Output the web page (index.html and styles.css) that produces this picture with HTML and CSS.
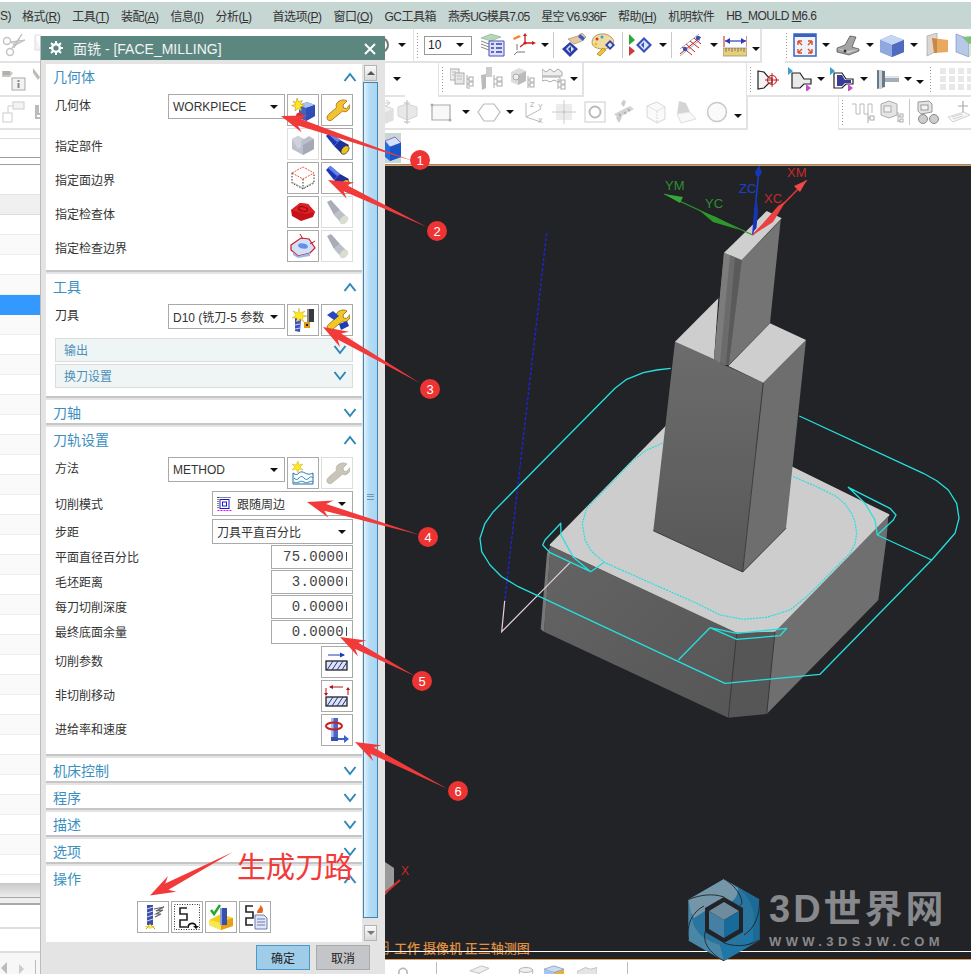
FILE: index.html
```html
<!DOCTYPE html>
<html lang="zh">
<head>
<meta charset="utf-8">
<title>面铣 - [FACE_MILLING]</title>
<link rel="stylesheet" href="styles.css">
</head>
<body>
<svg class="defs" aria-hidden="true">
  <defs>
    <linearGradient id="blockFront" x1="0" y1="0" x2="0" y2="1"><stop offset="0" stop-color="#6c6c6c"/><stop offset="1" stop-color="#585858"/></linearGradient>
    <linearGradient id="baseFront" x1="0" y1="0" x2="1" y2="1"><stop offset="0" stop-color="#646464"/><stop offset="1" stop-color="#565656"/></linearGradient>
    <symbol id="chev-up" viewBox="0 0 14 10"><path d="M1.500 9L7 2l5.500 7" fill="none" stroke="#2f87b8" stroke-width="2"/></symbol>
    <symbol id="chev-down" viewBox="0 0 14 10"><path d="M1.500 1L7 8l5.500-7" fill="none" stroke="#2f87b8" stroke-width="2"/></symbol>
    <symbol id="i-geom" viewBox="0 0 26 26"><path d="M9 8l8-3 8 3v11l-9 5-7-3z" fill="#3f62c8"/><path d="M9 8l8-3 8 3-9 3z" fill="#a9c4ee"/><path d="M16 11l9-3v11l-9 5z" fill="#2f4db5"/><path d="M7 1l1.500 4 4-1.500-2 3.500 4 1.500-4 1.500 1 4L8 11.500 5 14l.5-4-4-1.500 4-1L3 4l3 1.500z" fill="#ffe81f" stroke="#b8860b" stroke-width=".5"/><circle cx="9.500" cy="19" r="3.500" fill="#d8322a"/></symbol>
    <symbol id="i-wrench" viewBox="0 0 26 26"><path d="M23 4l-4 4 .5 3 3 .5 3.500-4c.5 3-1 6-4 7-1.500.4-2.500.2-3.500-.3L9 22c-1.500 2-4.500 2-5.500.5s-.5-3.500 1-5l8-7c-.5-1.500-.5-3 .5-4.500C15 3 20 2 23 4z" fill="#f2c230" stroke="#a06a10" stroke-width=".8"/></symbol>
    <symbol id="i-wrench-gray" viewBox="0 0 26 26"><path d="M23 4l-4 4 .5 3 3 .5 3.500-4c.5 3-1 6-4 7-1.500.4-2.500.2-3.500-.3L9 22c-1.500 2-4.500 2-5.500.5s-.5-3.500 1-5l8-7c-.5-1.500-.5-3 .5-4.500C15 3 20 2 23 4z" fill="#c9c5b8" stroke="#b5b0a0" stroke-width=".8"/></symbol>
    <symbol id="i-wrench-blue" viewBox="0 0 26 26"><path d="M23 4l-4 4 .5 3 3 .5 3.500-4c.5 3-1 6-4 7-1.500.4-2.500.2-3.500-.3L9 22c-1.500 2-4.500 2-5.500.5s-.5-3.500 1-5l8-7c-.5-1.500-.5-3 .5-4.500C15 3 20 2 23 4z" fill="#f4c820" stroke="#8a6a10" stroke-width=".8"/><path d="M3 8l6-4 6 5-5 4z" fill="#2a47c0"/><path d="M15 17l8-3 2 5-8 4z" fill="#1f3db0"/></symbol>
    <symbol id="i-part-gray" viewBox="0 0 26 26"><path d="M2 8l6-3 6 3 5-3 5 3v10l-11 6L2 18z" fill="#bcc0cc"/><path d="M2 8l6-3 6 3-3 2v6l-3 2z" fill="#cfd2da"/><path d="M13 14l11-6v10l-11 6z" fill="#a5a9b5"/></symbol>
    <symbol id="i-torch" viewBox="0 0 26 26"><path d="M2 5l4-4 10 8-6 6z" fill="#1f35b5"/><path d="M4 3l3-2 9 8-3 2z" fill="#5d86e8"/><path d="M10 15l6-6 9 5-7 9z" fill="#1e2f9e"/><ellipse cx="21" cy="19" rx="5" ry="3.200" transform="rotate(-50 21 19)" fill="#e8c21e" stroke="#222" stroke-width=".6"/></symbol>
    <symbol id="i-torch-gray" viewBox="0 0 26 26"><path d="M3 3l4-2 9 10-6 5z" fill="#a9adb8"/><path d="M10 16l6-5 8 8-6 6z" fill="#bcc0c8"/><ellipse cx="20" cy="21" rx="5" ry="3.500" transform="rotate(-45 20 21)" fill="#dcdcd0"/></symbol>
    <symbol id="i-face" viewBox="0 0 26 26"><path d="M2 8l11-6 11 6-11 6z" fill="none" stroke="#ee5a3a" stroke-dasharray="2 1"/><path d="M2 8v10l11 6 11-6V8M13 14v10" fill="none" stroke="#333" stroke-dasharray="1.500 1.500"/><path d="M2 17l11 6 11-6" fill="none" stroke="#888" stroke-width=".6"/></symbol>
    <symbol id="i-check-red" viewBox="0 0 26 26"><path d="M1 11l9-7 8 1 7 8-2 5-12 4-9-5z" fill="#c4121a"/><path d="M1 11l9-7 8 1 7 8-9 2z" fill="#e01e24"/><ellipse cx="13" cy="10" rx="4.500" ry="2.200" fill="none" stroke="#7a0a10" transform="rotate(15 13 10)"/></symbol>
    <symbol id="i-check-bnd" viewBox="0 0 26 26"><path d="M1 12l10-7 8 1 6 9-5 5-12 3-7-6z" fill="#cfe0f8" stroke="#d01a20" stroke-width="1.200"/><ellipse cx="13" cy="13" rx="5" ry="2.500" fill="#6a8ce8" transform="rotate(12 13 13)"/><path d="M3 19l5 4 12-3v3l-12 2-5-3z" fill="#9ab7e8"/><path d="M13 6L10 1M20 11l5-3" stroke="#d01a20"/></symbol>
    <symbol id="i-tool-new" viewBox="0 0 26 26"><path d="M17 2h7v13h-7z" fill="#3a3a3e"/><path d="M17 2h2v13h-2z" fill="#8a8a92"/><path d="M5 11l6 1-1 13-5-1z" fill="#3d55b8"/><path d="M6 14l4-1M5 18l5-1M5 22l5-1" stroke="#c9d4f5"/><path d="M9 1l1 5 5-2-3 4 5 1-5 2 2 4-4-3-3 3 0-4-5 0 4-3-3-4 5 2z" fill="#ffe81f" stroke="#c09a10" stroke-width=".4"/><rect x="14" y="15" width="6" height="6" fill="#e09a1a"/><rect x="16" y="17" width="2" height="2" fill="#222"/></symbol>
    <symbol id="i-method" viewBox="0 0 26 26"><path d="M3 13c3 2 4 2 6 0s4-1 6 0 4 2 8 0v11H3z" fill="#fff" stroke="#1f6d9f"/><path d="M4 18c2 2 3 2 5 0s3-2 5 0 3 2 5 0 3-1 4 0M4 22c2 1 3 1 5 0s3-1 5 0 3 1 5 0 3-1 4 0" fill="none" stroke="#1f80b8"/><path d="M8 1l1 4 4-1-3 3 3 3-4-1-1 4-2-4-4 1 3-3-3-3 4 1z" fill="#ffe81f" stroke="#c09a10" stroke-width=".4"/></symbol>
    <symbol id="i-cut" viewBox="0 0 26 26"><path d="M4 6h16" stroke="#1f3db0"/><path d="M16 3.500l5 2.500-5 2.500z" fill="#1f3db0"/><rect x="2" y="12" width="21" height="9" fill="#dfe4f5" stroke="#111" stroke-width="1.200"/><path d="M3 21l6-9M8 21l6-9M13 21l6-9M18 21l5-8" stroke="#1f2f88"/></symbol>
    <symbol id="i-noncut" viewBox="0 0 26 26"><path d="M6 4h13" stroke="#b81218"/><path d="M9 2v4l-4-2z" fill="#b81218"/><path d="M2 5v7M24 12V5" stroke="#b81218"/><path d="M0 10h4l-2 3zM22 7h4l-2-3z" fill="#b81218"/><rect x="2" y="14" width="21" height="9" fill="#dfe4f5" stroke="#111" stroke-width="1.200"/><path d="M3 23l6-9M8 23l6-9M13 23l6-9M18 23l5-8" stroke="#1f2f88"/></symbol>
    <symbol id="i-feed" viewBox="0 0 26 26"><rect x="7" y="1" width="7" height="19" fill="#4a66c8"/><rect x="7" y="1" width="2.500" height="19" fill="#a8bcee"/><ellipse cx="10" cy="9" rx="8" ry="3.500" fill="none" stroke="#c8201c" stroke-width="2"/><path d="M7 20h7v4H7z" fill="#3a50a8"/><path d="M14 21h6v-3l5 4-5 4v-3h-6z" fill="#3a60d8"/></symbol>
    <symbol id="i-gen" viewBox="0 0 26 26"><rect x="7" y="1" width="6" height="20" fill="#3f4fa8"/><path d="M7 5l6-2M7 9l6-2M7 13l6-2M7 17l6-2" stroke="#c9d4f5"/><path d="M14 5l10-2-8 4 7-1-7 4 5 0-6 3" fill="none" stroke="#666" stroke-width="1.200"/><path d="M4 22h12l-6 3z" fill="#f0e060"/><path d="M10 20l-4 5M10 20l5 5" stroke="#c4a810"/></symbol>
    <symbol id="i-replay" viewBox="0 0 26 26"><rect x=".5" y=".5" width="25" height="25" fill="none" stroke="#333" stroke-dasharray="1 1.500"/><path d="M13 4H6v6h7v6H6v7h7" fill="none" stroke="#222" stroke-width="1.600"/><path d="M14 24c0-6 8-6 8-1" fill="none" stroke="#111" stroke-width="1.600"/><path d="M19 22h6l-3 3z" fill="#111"/></symbol>
    <symbol id="i-verify" viewBox="0 0 26 26"><path d="M1 16l12-6 12 4v8l-12 4-12-5z" fill="#f2d020"/><path d="M13 18l12-4v8l-12 4z" fill="#e8a018"/><path d="M1 16l12 3v7l-12-5z" fill="#f8e850"/><rect x="12" y="4" width="7" height="17" fill="#3a50a8"/><rect x="12" y="4" width="2" height="17" fill="#8aa0e0"/><path d="M3 6l3 4 6-9" fill="none" stroke="#28a828" stroke-width="2.500"/></symbol>
    <symbol id="i-list" viewBox="0 0 26 26"><path d="M11 2H4v6h7v6H4v7h7" fill="none" stroke="#222" stroke-width="1.600"/><path d="M13 11h9l3 3v11H13z" fill="#dfe6f8" stroke="#6a7ab0"/><path d="M15 15h8M15 18h8M15 21h8" stroke="#6a7ab0"/><path d="M15 9c0-4 4-5 3-8 3 2 4 5 2 8z" fill="#e8641c"/></symbol>

    <symbol id="t-scissors" viewBox="0 0 24 24"><circle cx="5" cy="8" r="3.500" fill="none" stroke="#c4c4c4" stroke-width="1.500"/><circle cx="8" cy="19" r="3.500" fill="none" stroke="#c4c4c4" stroke-width="1.500"/><path d="M8 9l15-2-11 6M9 16L20 1l-8 14" fill="#d8d8d8" stroke="#bbb"/></symbol>
    <symbol id="t-toolinfo" viewBox="0 0 24 24"><path d="M0 4h8l3 2-3 4H0z" fill="#c8c8c0"/><path d="M1 5l7 0M1 7h7" stroke="#999"/><rect x="10" y="11" width="13" height="12" fill="#f2f2f2" stroke="#aaa"/><rect x="15.500" y="13" width="2" height="2" fill="#888"/><rect x="15.500" y="16" width="2" height="5" fill="#888"/></symbol>
    <symbol id="t-rects" viewBox="0 0 24 24"><rect x="1" y="13" width="9" height="9" fill="#fff" stroke="#ccc"/><rect x="11" y="2" width="11" height="7" fill="#f4f4f4" stroke="#ccc"/><path d="M6 13V6h5" fill="none" stroke="#ccc"/></symbol>
    <symbol id="t-stub-a" viewBox="0 0 7 24"><path d="M1 2h6M1 2v15h6" fill="#f2f2f2" stroke="#ddd"/></symbol>
    <symbol id="t-stub-b" viewBox="0 0 7 24"><path d="M0 1l7 9-2 3-5-7z" fill="#bdbdb5"/></symbol>
    <symbol id="t-stub-c" viewBox="0 0 7 24"><path d="M1 5v13h6M3 5v9h4" fill="none" stroke="#bbb" stroke-width="2"/></symbol>
    <symbol id="t-stack" viewBox="0 0 24 24"><path d="M0 5l10-4 10 3-10 4z" fill="#b7d8b7" stroke="#7aaa8a" stroke-width=".6"/><path d="M0 8l8 3M0 11l8 3M0 14l8 3" stroke="#888"/><path d="M8 8h15v15H8z" fill="#dce0f8" stroke="#4a50b8"/><path d="M10 11h3M10 15h3M10 19h3M15 11h6M15 15h6M15 19h6" stroke="#3a40a8" stroke-width="1.400"/></symbol>
    <symbol id="t-csys" viewBox="0 0 24 24"><path d="M1 5l6-3 2 2-7 3z" fill="#f08a30"/><path d="M13 10V2M13 10h9M13 10l-5 4" stroke="#c82020" stroke-width="1.300"/><path d="M11 3l2-3 2 3zM20 8l4 2-4 2z" fill="#c82020"/><path d="M5 17V11M5 19h8M5 19l-3 3" stroke="#777"/><circle cx="13" cy="10" r="1.500" fill="#c82020"/></symbol>
    <symbol id="t-hand" viewBox="0 0 24 24"><path d="M6 6l10-3 4-3 4 4-4 4-8 3z" fill="#e8c8a0" stroke="#a07a50" stroke-width=".6"/><path d="M18 1l5 4-2 3-5-4z" fill="#3a60c0"/><path d="M0 16l8-7 8 7-8 8z" fill="#2a3fa8"/><path d="M4 16l4-4 4 4-4 4z" fill="#dbe4f8"/><path d="M6 16l3-3v7z" fill="#2a3fa8"/></symbol>
    <symbol id="t-palette" viewBox="0 0 24 24"><path d="M1 9c0-7 10-10 16-7s7 8 4 9c-2 .5-3 0-3 2s-3 4-8 3-9-2-9-7z" fill="#f0dca0" stroke="#9a7a30" stroke-width=".7"/><circle cx="6" cy="6" r="1.500" fill="#e03030"/><circle cx="11" cy="4" r="1.500" fill="#30a0e0"/><circle cx="5" cy="11" r="1.500" fill="#e8c020"/><path d="M6 21l6-6 3 2-6 6z" fill="#f2c230" stroke="#a06a10" stroke-width=".6"/><path d="M14 12l5-5 5 5-5 5z" fill="#2a3fa8"/><path d="M16.500 12l2.500-2.500 2.500 2.500-2.500 2.500z" fill="#dbe4f8"/></symbol>
    <symbol id="t-play" viewBox="0 0 24 24"><path d="M0 1l6 6-6 5z" fill="#2aa838"/><path d="M0 13l6 5-6 5z" fill="#d03a3a"/><path d="M7 12l8-8 8 8-8 8z" fill="#3a50b8"/><path d="M10 12l5-5 5 5-5 5z" fill="#dbe4f8"/><path d="M12 12l3-3v6z" fill="#3a50b8"/></symbol>
    <symbol id="t-pattern" viewBox="0 0 24 24"><path d="M1 21L22 4M3 14l10 8M7 11l9 8M11 8l9 7M15 5l7 6" stroke="#c82020"/><path d="M1 16L20 1M1 23L21 7" stroke="#777" stroke-width=".6"/><circle cx="19" cy="5" r="2.200" fill="#3a50b8"/><circle cx="6" cy="16" r="2.200" fill="#3a50b8"/></symbol>
    <symbol id="t-measure" viewBox="0 0 24 24"><path d="M1 3v11M24 3v11" stroke="#c81e1e"/><path d="M2 8h21" stroke="#2a3fb8" stroke-width="1.200"/><path d="M2 8l5-3v6zM23 8l-5-3v6z" fill="#2a3fb8"/><rect x="0" y="15" width="24" height="8" fill="#e8cf78" stroke="#888" stroke-width=".7"/><path d="M3 15v4M6 15v3M9 15v4M12 15v3M15 15v4M18 15v3M21 15v4" stroke="#555" stroke-width=".7"/></symbol>
    <symbol id="t-fit" viewBox="0 0 24 24"><rect x="1" y="1" width="22" height="22" fill="#eef2fb" stroke="#3a60c0" stroke-width="1.500"/><path d="M1 1h22v3H1z" fill="#3a60c0"/><path d="M5 8h4M5 8v4M19 8h-4M19 8v4M5 20h4M5 20v-4M19 20h-4M19 20v-4M5 8l4 4M19 8l-4 4M5 20l4-4M19 20l-4-4" stroke="#e05020" stroke-width="1.400" fill="none"/></symbol>
    <symbol id="t-shape" viewBox="0 0 24 24"><path d="M1 15l8-3 5-9 6 1-4 10 7 2v2l-10 4-12-3z" fill="#a4a4a4" stroke="#333" stroke-width=".6"/><path d="M1 15l11 3 11-2-11 4z" fill="#d0d0d0"/><circle cx="9" cy="18" r="1.500" fill="#333"/></symbol>
    <symbol id="t-cube" viewBox="0 0 24 24"><path d="M0 7l11-5 13 5v12l-12 5L0 19z" fill="#6d86cc"/><path d="M0 7l11-5 13 5-12 5z" fill="#c5d6f2"/><path d="M12 12l12-5v12l-12 5z" fill="#4f6abf"/><path d="M0 7l12 5v12L0 19z" fill="#8fa8e0"/></symbol>
    <symbol id="t-tan" viewBox="0 0 24 24"><path d="M2 3l10-3v18l-10 5z" fill="#dcd8d0" stroke="#999" stroke-width=".6"/><path d="M7 5l16 2v12l-13 1z" fill="#e8a860"/><path d="M7 5l5 1v14H9z" fill="#c8884a"/></symbol>
    <symbol id="t-green" viewBox="0 0 24 24"><path d="M1 1l13 5v18L1 19z" fill="#b8c8e8" stroke="#7088b8" stroke-width=".6"/><path d="M14 10l10-4v12l-10 6z" fill="#d8e8d0"/><path d="M7 4l14-1 3 4-10 4z" fill="#7cc07c"/></symbol>
    <symbol id="t-tree-doc" viewBox="0 0 24 24"><rect x="0" y="2" width="9" height="11" fill="#eee" stroke="#aaa"/><rect x="5" y="6" width="9" height="11" fill="#e8e8e8" stroke="#aaa"/><path d="M2 5h4M2 8h2M7 9h5M7 12h5" stroke="#bbb"/><path d="M17 8v13M17 12h3M17 17h3M17 21h3" stroke="#aaa"/><rect x="19" y="10" width="4" height="4" fill="#fff" stroke="#aaa"/><rect x="19" y="15" width="4" height="4" fill="#fff" stroke="#aaa"/></symbol>
    <symbol id="t-tree-tool" viewBox="0 0 24 24"><rect x="7" y="0" width="6" height="10" fill="#ccc"/><path d="M2 8l5-1 0 14-4 2z" fill="#bbb"/><path d="M15 8v13M15 12h3M15 17h3" stroke="#aaa"/><rect x="18" y="10" width="5" height="4" fill="#fff" stroke="#aaa"/><rect x="18" y="15" width="5" height="4" fill="#fff" stroke="#aaa"/></symbol>
    <symbol id="t-tree-cube" viewBox="0 0 24 24"><path d="M0 5l8-4 7 3v10l-8 4-7-3z" fill="#ddd"/><path d="M7 8l8-4v10l-8 4z" fill="#bbb"/><circle cx="5" cy="10" r="3" fill="#eee" stroke="#aaa"/><path d="M17 9v12M17 13h2M17 18h2" stroke="#aaa"/><rect x="19" y="11" width="4" height="4" fill="#fff" stroke="#aaa"/><rect x="19" y="16" width="4" height="4" fill="#fff" stroke="#aaa"/></symbol>
    <symbol id="t-tree-crown" viewBox="0 0 24 24"><path d="M0 2l4 3 4-3 4 3 4-3 4 3v4H0z" fill="#eee" stroke="#aaa"/><path d="M0 10h18v4c-2 1-3 1-4 0s-3-1-4 0-3 1-4 0-3-1-6 0z" fill="none" stroke="#aaa"/><path d="M16 12v10M16 15h3M16 20h3" stroke="#aaa"/><rect x="19" y="13" width="4" height="4" fill="#fff" stroke="#aaa"/><rect x="19" y="18" width="4" height="4" fill="#fff" stroke="#aaa"/></symbol>
    <symbol id="t-tool-cross" viewBox="0 0 24 24"><path d="M1 4l6 1 5 6h3v5h-3l-5 5-6 1z" fill="#f4f4f4" stroke="#222" stroke-width="1.200"/><circle cx="15" cy="13" r="4.500" fill="none" stroke="#d01a20" stroke-width="1.200"/><path d="M15 6v14M8 13h14" stroke="#d01a20"/></symbol>
    <symbol id="t-tool-lt" viewBox="0 0 24 24"><path d="M0 0l5 4-5 4z" fill="#3a9fd0"/><path d="M4 6h8l4 6h7v5h-7l-4 4H4z" fill="#eaeaea" stroke="#222" stroke-width="1.200"/><path d="M18 17l5 4-5 4z" fill="#c050c8"/></symbol>
    <symbol id="t-tool-dk" viewBox="0 0 24 24"><path d="M0 0l5 4-5 4z" fill="#3a9fd0"/><path d="M4 6h8l4 6h7v5h-7l-4 4H4z" fill="#fff" stroke="#222" stroke-width="1.200"/><path d="M7 8h5l3 5h6v3h-6l-3 3H7z" fill="#3a3a98"/><path d="M18 17l5 4-5 4z" fill="#c050c8"/></symbol>
    <symbol id="t-spindle" viewBox="0 0 24 24"><path d="M1 3l8 1v16l-8 2z" fill="#6a7884"/><path d="M3 3h3v19H3z" fill="#c8d0d8"/><path d="M9 9h14v6H9z" fill="#a4aeb8"/><path d="M9 9h14v2H9z" fill="#dde2e8"/></symbol>
    <symbol id="t-grid" viewBox="0 0 33 24"><path d="M2 1h6v6H2zM11 1h6v6h-6zM20 1h6v6h-6zM29 1h4v6h-4zM2 9h6v6H2zM11 9h6v6h-6zM20 9h6v6h-6zM29 9h4v6h-4zM2 17h6v6H2zM11 17h6v6h-6zM20 17h6v6h-6zM29 17h4v6h-4z" fill="#e8e8e8"/></symbol>
    <symbol id="t-gcube1" viewBox="0 0 24 24"><path d="M2 9l9-4 10 4v11l-10 4-9-4z" fill="#f0f0f0" stroke="#d4d4d4"/><path d="M11 13l10-4v11l-10 4z" fill="#e0e0e0"/><path d="M8 3h10M14 0l4 3-4 3" stroke="#ccc" fill="none"/></symbol>
    <symbol id="t-gcube2" viewBox="0 0 24 24"><path d="M2 7l9-3 10 3v9l-10 4-9-4z" fill="#e8e8e8" stroke="#d4d4d4"/><path d="M11 0v24M8 3h6M8 22h6" stroke="#bbb"/></symbol>
    <symbol id="t-rect" viewBox="0 0 24 24"><path d="M3 5h18v15H3z" fill="#f8f8f8" stroke="#aaa" stroke-width="1.200"/><circle cx="3" cy="5" r="1.500" fill="#aaa"/><circle cx="21" cy="20" r="1.500" fill="#aaa"/></symbol>
    <symbol id="t-hex" viewBox="0 0 24 24"><path d="M7 4h10l6 8-6 9H7l-6-9z" fill="#fff" stroke="#bbb" stroke-width="1.200"/></symbol>
    <symbol id="t-xyz" viewBox="0 0 24 24"><path d="M5 17V3M5 17l15-8M5 17l15 5" stroke="#bbb" fill="none"/><text x="9" y="7" class="ic-letter">Z</text><text x="17" y="9" class="ic-letter">Y</text><text x="17" y="23" class="ic-letter">X</text></symbol>
    <symbol id="t-target" viewBox="0 0 24 24"><rect x="4" y="4" width="16" height="16" fill="#ececec"/><path d="M12 0v24M0 12h24" stroke="#ccc"/><circle cx="12" cy="12" r="1" fill="#bbb"/></symbol>
    <symbol id="t-ring" viewBox="0 0 24 24"><rect x="2" y="2" width="20" height="20" fill="#fff" stroke="#ccc"/><circle cx="12" cy="12" r="5.500" fill="none" stroke="#bbb" stroke-width="2"/></symbol>
    <symbol id="t-text" viewBox="0 0 24 24"><path d="M2 14l16-8 4 3-16 9z" fill="#d4d4d4"/><path d="M9 4l2-4 3 1-2 6zM4 18l3-3 3 2-3 6z" fill="#ccc"/><path d="M7 14l2 2M12 12l2 2M16 9l2 2" stroke="#aaa" stroke-width="1.500"/></symbol>
    <symbol id="t-wire" viewBox="0 0 24 24"><path d="M2 6l10-4 8 5v12l-8 4-10-6z" fill="#fafafa" stroke="#d8d8d8"/><path d="M2 6l10 5 8-4M12 11v12" fill="none" stroke="#d8d8d8" stroke-dasharray="2 1"/></symbol>
    <symbol id="t-lamp" viewBox="0 0 24 24"><path d="M5 1l7 2 4 9-13 2z" fill="#d4d4d4"/><path d="M16 12l6 7-15 4-4-9z" fill="#f8f8f8" stroke="#e0e0e0"/></symbol>
    <symbol id="t-circle" viewBox="0 0 24 24"><circle cx="12" cy="12" r="9.500" fill="#fafafa" stroke="#c8c8c8" stroke-width="1.500"/></symbol>
    <symbol id="t-tree-wave" viewBox="0 0 24 24"><path d="M1 4h4v10h4V4h4v10h4V4h4v9" fill="none" stroke="#bbb"/><path d="M17 14v9M17 18h2" stroke="#aaa"/><rect x="19" y="16" width="4" height="4" fill="#fff" stroke="#aaa"/></symbol>
    <symbol id="t-tree-block" viewBox="0 0 24 24"><path d="M1 4l8-3 8 3v11l-8 3-8-3z" fill="#e4e4e4" stroke="#aaa"/><rect x="4" y="6" width="7" height="6" fill="#f2f2f2" stroke="#aaa"/><path d="M18 12v10M18 16h2M18 21h2" stroke="#aaa"/><rect x="20" y="14" width="3" height="3" fill="#fff" stroke="#aaa"/><rect x="20" y="19" width="3" height="3" fill="#fff" stroke="#aaa"/></symbol>
    <symbol id="t-binoc" viewBox="0 0 24 24"><path d="M3 2l11-1 3 3v8l-11 2-3-3z" fill="#e4e4e4" stroke="#999"/><rect x="6" y="5" width="7" height="5" fill="#f4f4f4" stroke="#999"/><circle cx="8" cy="19" r="4.500" fill="#ccc" stroke="#888"/><circle cx="19" cy="19" r="4.500" fill="#ccc" stroke="#888"/></symbol>
    <symbol id="t-tag" viewBox="0 0 24 24"><path d="M1 17l16-5 6 3-17 7z" fill="#f6f6f6" stroke="#d4d4d4"/><path d="M5 17l10-3M6 19l10-3" stroke="#d4d4d4"/><path d="M16 1v11M11 6h10" stroke="#aaa" stroke-width="1.200"/></symbol>
    <symbol id="t-mini" viewBox="0 0 16 30"><path d="M0 8l10-4 6 6v14l-11 4-5-4z" fill="#1e6fe0"/><path d="M0 8l10-4 6 6-11 4z" fill="#cfe0f8" stroke="#7a3aa0" stroke-width=".6"/><path d="M5 14l11-4v14l-11 4z" fill="#1a55c8"/></symbol>
    <symbol id="t-lock" viewBox="0 0 24 24"><path d="M7 24V9a5 5 0 0 1 10 0v15" fill="none" stroke="#bbb" stroke-width="2"/></symbol>
    <symbol id="t-plane" viewBox="0 0 24 24"><path d="M1 7l14-6 9 3-12 6z" fill="#eee" stroke="#bbb"/><path d="M12 10v14" stroke="#bbb"/></symbol>
    <symbol id="t-cyl" viewBox="0 0 24 24"><ellipse cx="12" cy="6" rx="8" ry="3" fill="#eee" stroke="#aaa"/><path d="M4 6v18M20 6v18" stroke="#aaa"/></symbol>
    <symbol id="t-ccube" viewBox="0 0 24 24"><path d="M0 5l12-4 12 4v19H0z" fill="#e8b040"/><path d="M0 5l12-4 12 4-12 4z" fill="#c8dcf4" stroke="#6a8ac8" stroke-width=".7"/><path d="M0 5l12 4v15H0z" fill="#a8c4ec"/></symbol>
    <symbol id="t-blocks" viewBox="0 0 24 24"><path d="M0 8l10-5 6 2 8-2v21H0z" fill="#e4e4e4" stroke="#bbb"/></symbol>
  </defs>
</svg>

<header class="menubar">
  <span class="mi first">S)</span>
  <span class="mi">格式(<u>R</u>)</span>
  <span class="mi">工具(<u>T</u>)</span>
  <span class="mi">装配(<u>A</u>)</span>
  <span class="mi">信息(<u>I</u>)</span>
  <span class="mi">分析(<u>L</u>)</span>
  <span class="mi wide">首选项(<u>P</u>)</span>
  <span class="mi">窗口(<u>O</u>)</span>
  <span class="mi">GC工具箱</span>
  <span class="mi tight">燕秀UG模具7.05</span>
  <span class="mi tight">星空 V6.936F</span>
  <span class="mi">帮助(<u>H</u>)</span>
  <span class="mi">机明软件</span>
  <span class="mi">HB_MOULD <u>M</u>6.6</span>
</header>

<section class="toolbars">
  <div class="tb-row">
    <div class="tb-group g1a">
      <svg class="ic m2"><use href="#t-scissors"/></svg>
      <svg class="stub m8"><use href="#t-stub-a"/></svg>
      <span class="fill"></span>
      <span class="stub-ring"></span>
      <i class="caret m9"></i>
    </div>
    <div class="tb-group g1b edge-left">
      <i class="grip m2"></i>
      <div class="tb-select m5"><span>10</span><i class="caret"></i></div>
      <svg class="ic m9"><use href="#t-stack"/></svg>
      <svg class="ic m7"><use href="#t-csys"/></svg>
      <i class="caret m5"></i><i class="vr m4"></i>
      <svg class="ic m8"><use href="#t-hand"/></svg>
      <svg class="ic m5"><use href="#t-palette"/></svg>
      <i class="vr m7"></i>
      <svg class="ic m6"><use href="#t-play"/></svg>
      <i class="caret m6"></i><i class="vr m4"></i>
      <svg class="ic m7"><use href="#t-pattern"/></svg>
      <i class="caret m7"></i>
      <svg class="ic m5"><use href="#t-measure"/></svg>
      <i class="caret low m5"></i>
    </div>
    <div class="tb-group g1c">
      <i class="grip"></i>
      <svg class="ic m5"><use href="#t-fit"/></svg>
      <i class="caret m5"></i>
      <svg class="ic m6"><use href="#t-shape"/></svg>
      <i class="caret m6"></i>
      <svg class="ic m6"><use href="#t-cube"/></svg>
      <i class="caret m6"></i>
      <svg class="ic m7"><use href="#t-tan"/></svg>
      <svg class="ic m6"><use href="#t-green"/></svg>
    </div>
  </div>

  <div class="tb-row">
    <div class="tb-group g2a">
      <svg class="ic m2"><use href="#t-toolinfo"/></svg>
      <svg class="stub m7"><use href="#t-stub-b"/></svg>
      <span class="fill"></span>
      <i class="caret m4 tail4"></i>
    </div>
    <div class="tb-group g2b edge-left">
      <i class="grip m2"></i>
      <svg class="ic m6"><use href="#t-tree-doc"/></svg>
      <svg class="ic m5"><use href="#t-tree-tool"/></svg>
      <svg class="ic m8"><use href="#t-tree-cube"/></svg>
      <svg class="ic m7"><use href="#t-tree-crown"/></svg>
      <i class="caret m4"></i>
    </div>
    <div class="tb-group g2c edge-left">
      <i class="grip m2"></i>
      <svg class="ic m5"><use href="#t-tool-cross"/></svg>
      <svg class="ic m7"><use href="#t-tool-lt"/></svg>
      <i class="caret m5"></i>
      <svg class="ic m5"><use href="#t-tool-dk"/></svg>
      <i class="caret m6"></i>
      <svg class="ic m8"><use href="#t-spindle"/></svg>
      <i class="caret m4"></i>
      <i class="caret low m4"></i>
      <span class="fill"></span>
      <i class="grip edge-left-tight"></i>
      <svg class="ic-grid"><use href="#t-grid"/></svg>
    </div>
  </div>

  <div class="tb-row">
    <div class="tb-group g3a">
      <svg class="ic m2"><use href="#t-rects"/></svg>
      <svg class="stub m9"><use href="#t-stub-c"/></svg>
      <span class="fill"></span>
      <svg class="ic"><use href="#t-gcube1"/></svg>
      <svg class="ic"><use href="#t-gcube2"/></svg>
      <svg class="ic m9"><use href="#t-rect"/></svg>
      <i class="caret m9"></i>
      <svg class="ic m7"><use href="#t-hex"/></svg>
      <i class="caret m5"></i>
      <svg class="ic m7"><use href="#t-xyz"/></svg>
      <svg class="ic m7"><use href="#t-target"/></svg>
      <svg class="ic m7"><use href="#t-ring"/></svg>
      <svg class="ic m5"><use href="#t-text"/></svg>
      <svg class="ic m9"><use href="#t-wire"/></svg>
      <svg class="ic m5"><use href="#t-lamp"/></svg>
      <svg class="ic m7"><use href="#t-circle"/></svg>
      <i class="caret low m5"></i>
      <span class="tail4"></span>
    </div>
    <div class="tb-group g3b edge-left">
      <i class="grip m2"></i>
      <svg class="ic m7"><use href="#t-tree-wave"/></svg>
      <svg class="ic m5"><use href="#t-tree-block"/></svg>
      <i class="vr m5"></i>
      <svg class="ic m5"><use href="#t-binoc"/></svg>
      <svg class="ic m8"><use href="#t-tag"/></svg>
    </div>
  </div>

  <div class="tb-row last">
    <div class="path-input"></div>
    <span class="fill"></span>
    <div class="tab-cube"><svg class="ic-mini"><use href="#t-mini"/></svg></div>
    <span class="tab-tail"></span>
  </div>
</section>

<main class="workspace">
  <aside class="navlist">
    <div class="nav-head"></div>
    <div class="nav-rows">
      <div class="row head"></div><div class="row"></div><div class="row"></div><div class="row"></div><div class="row"></div>
      <div class="row sel"></div><div class="row"></div><div class="row"></div><div class="row"></div><div class="row"></div>
      <div class="row"></div><div class="row"></div><div class="row"></div><div class="row"></div><div class="row"></div>
      <div class="row"></div><div class="row"></div><div class="row"></div><div class="row"></div><div class="row"></div>
      <div class="row"></div><div class="row"></div><div class="row"></div><div class="row"></div><div class="row"></div>
      <div class="row"></div><div class="row"></div><div class="row"></div><div class="row"></div><div class="row"></div>
      <div class="row"></div><div class="row"></div><div class="row"></div><div class="row"></div>
    </div>
    <div class="nav-split"></div>
    <div class="nav-lower"><div class="lower-row"></div><div class="lower-row"></div></div>
    <div class="nav-tabs"><i class="tab-l"></i><i class="tab-r"></i><i class="tab-vr"></i></div>
  </aside>

  <div class="graphics">
    <div class="viewport">
      <svg class="scene" viewBox="385 166 586 793">
        <!-- base -->
        <path d="M550.700 545L680 412.600 888.300 515 775 631.700 736.700 632.700z" fill="#cdcdcd" stroke="#cdcdcd" stroke-width="2" stroke-linejoin="round"/>
        <path d="M550.700 546L736.700 632.700 728.300 717.700 544 631.700z" fill="url(#baseFront)"/>
        <path d="M550.700 546L547 553 540.700 629.300 544 631.700z" fill="#777"/>
        <path d="M736.700 632.700L775 631.700 766.700 714 728.300 717.700z" fill="#565656"/>
        <path d="M775 631.700L888.300 516 886.700 537 878.300 600 766.700 714z" fill="#6f6f6f"/>
        <path d="M736.700 632.700L728.300 717.700M775 631.700L766.700 714" stroke="#3a3a3a"/>
        <!-- middle block -->
        <path d="M675 341.700L714 359.300 724.300 365 763.300 382.700 742.700 572 653.300 530.700z" fill="url(#blockFront)"/>
        <path d="M763.300 382.700L806 340 786 528.300 742.700 572z" fill="#6e6e6e"/>
        <path d="M763.300 382.700L742.700 572 653.300 530.700M742.700 572L786 528.300" fill="none" stroke="#3c3c3c"/>
        <path d="M718.300 298.300L675 341.700 714 359.300z" fill="#cecece"/>
        <path d="M770 323.300L806 340 763.300 382.700 728.300 366z" fill="#cecece"/>
        <!-- thin block -->
        <path d="M724 253L741.700 260 728.700 365 724.300 365 714 359.300z" fill="#6b6b6b"/>
        <path d="M724 253L730 255 720 363 714 359.300z" fill="#7c7c7c"/>
        <path d="M735 258L741.700 260 728.700 365 726 364z" fill="#5a5a5a"/>
        <path d="M741.700 260L780.700 220 770 323.300 728.700 365z" fill="#747474"/>
        <path d="M724 252.700L766.700 211 781.700 218.300 741.700 260z" fill="#cfcfcf"/>
        <!-- axes -->
        <path d="M752.700 235L664.300 194" stroke="#2b9a2b" stroke-width="1.300"/>
        <path d="M664.300 194L683 197 680 203z" fill="#35a835"/>
        <path d="M700 211L716 217 740 230 713 222z" fill="#2b9a2b"/>
        <path d="M752.700 235L759.300 166" stroke="#1a3ec8" stroke-width="1.500"/>
        <path d="M759 166L762 172 760 176 756 176 755 172z" fill="#1636b8"/>
        <path d="M754 211L756 193 758 211 756.500 228 753 232z" fill="#1636b8"/>
        <path d="M752.700 235L806.700 180.300" stroke="#e23a3a" stroke-width="1.500"/>
        <path d="M806.700 180.300L800 192 794 186z" fill="#ef4a4a"/>
        <path d="M753 235L778 206 786 201 773 222z" fill="#ea4040"/>
        <text x="665" y="190" class="axis green">YM</text>
        <text x="705" y="208" class="axis green">YC</text>
        <text x="739" y="193" class="axis blue">ZC</text>
        <text x="764" y="203" class="axis red">XC</text>
        <text x="787" y="177" class="axis red">XM</text>
        <!-- tool path -->
        <path d="M546.700 233.300L504.700 600.700" class="blue-dash"/>
        <path d="M570 562.700L501.700 631.700 504.700 600.700" class="pink"/>
        <path d="M670.700 368.300L656.700 370 643.300 372.700 626.700 379.300 615 388.300 493.300 511.700 485 523.300 480 538.300 481.700 551.700 490 565 501.700 576.700 518.300 586.700 725 683.300 820 674.300 931.700 560 955 533.300 959 518.300 956.700 503.300 948.300 490 936.700 480.700 923.300 473.300 799.300 416" class="cyan"/>
        <path d="M662.300 443.300L646.700 450 633.300 460 586.700 508.300 582.300 523.300 585 540 591.700 551.700 605 562.700 696.700 603.300 720 615 743.300 619.300 766.700 617.300 790 610 806.700 596.700 850 553.300 855 544 856.700 533.300 855 522 851.700 513.300 845 504 836.700 496.700 816.700 486.700 793.300 476.700" class="cyan-dot"/>
        <path d="M605 561.700L590.700 571.700 550 552.700 542.700 545 545 540 560.700 523.300 561 535 573.300 557.300 590.700 571.700" class="cyan"/>
        <path d="M931.700 560L877.300 535 893.300 520 896 515 890 508.300 848.300 487.300 865 503.300 875 520 877.300 535" class="cyan"/>
        <path d="M678.300 660L710 627.700 736.700 639.300 780 635.700 786.700 628.300 736.700 633.300 710 627.700" class="cyan"/>
        <!-- WCS triad -->
        <path d="M385 862L394 868 394 885 385 895z" fill="#9a9a9a"/>
        <path d="M385 893L400 880" stroke="#d83030" stroke-width="2"/>
        <text x="401" y="875" class="axis red small">X</text>
        <path d="M385 942h3v12h-3M385 947h2" fill="none" stroke="#e0903f"/>
        <text x="394" y="953" class="status">工作 摄像机 正三轴测图</text>
      </svg>
      <div class="hline"></div>
    </div>
    <div class="bottom-strip">
      <svg class="ic-b m-lock"><use href="#t-lock"/></svg>
      <i class="b-vr m-a"></i>
      <svg class="ic-b m-b"><use href="#t-plane"/></svg>
      <svg class="ic-b m-c"><use href="#t-cyl"/></svg>
      <svg class="ic-b m-d"><use href="#t-ccube"/></svg>
      <svg class="ic-b m-e"><use href="#t-blocks"/></svg>
      <i class="b-vr m-f"></i>
    </div>
  </div>
</main>

<div class="dialog">
  <div class="titlebar">
    <svg class="gear" viewBox="0 0 14 14"><circle cx="7" cy="7" r="3.800" fill="none" stroke="#fff" stroke-width="2.400"/><path d="M7 0v3M7 11v3M0 7h3M11 7h3M2 2l2 2M10 10l2 2M12 2l-2 2M4 10l-2 2" stroke="#fff" stroke-width="2"/></svg>
    <span class="title">面铣 - [FACE_MILLING]</span>
    <svg class="close" viewBox="0 0 12 12"><path d="M1 1l10 10M11 1L1 11" stroke="#fff" stroke-width="2"/></svg>
  </div>
  <div class="dlg-body">
    <div class="panels">
      <section class="sec open">
        <div class="sec-head"><span>几何体</span><svg class="chev"><use href="#chev-up"/></svg></div>
        <div class="row-f top"><span class="lab tall">几何体</span><div class="sel-box w117"><span>WORKPIECE</span><i class="caret"></i></div><div class="btn"><svg><use href="#i-geom"/></svg></div><div class="btn"><svg><use href="#i-wrench"/></svg></div></div>
        <div class="row-f"><span class="lab low">指定部件</span><div class="btn dis"><svg><use href="#i-part-gray"/></svg></div><div class="btn"><svg><use href="#i-torch"/></svg></div></div>
        <div class="row-f"><span class="lab low">指定面边界</span><div class="btn"><svg><use href="#i-face"/></svg></div><div class="btn"><svg><use href="#i-torch"/></svg></div></div>
        <div class="row-f"><span class="lab low">指定检查体</span><div class="btn"><svg><use href="#i-check-red"/></svg></div><div class="btn dis"><svg><use href="#i-torch-gray"/></svg></div></div>
        <div class="row-f"><span class="lab low">指定检查边界</span><div class="btn"><svg><use href="#i-check-bnd"/></svg></div><div class="btn dis"><svg><use href="#i-torch-gray"/></svg></div></div>
      </section>

      <section class="sec open">
        <div class="sec-head"><span>工具</span><svg class="chev"><use href="#chev-up"/></svg></div>
        <div class="row-f top"><span class="lab tall">刀具</span><div class="sel-box w117"><span>D10 (铣刀-5 参数</span><i class="caret"></i></div><div class="btn"><svg><use href="#i-tool-new"/></svg></div><div class="btn"><svg><use href="#i-wrench-blue"/></svg></div></div>
        <div class="subsec"><span>输出</span><svg class="chev"><use href="#chev-down"/></svg></div>
        <div class="subsec"><span>换刀设置</span><svg class="chev"><use href="#chev-down"/></svg></div>
      </section>

      <section class="sec"><div class="sec-head"><span>刀轴</span><svg class="chev"><use href="#chev-down"/></svg></div></section>

      <section class="sec open">
        <div class="sec-head"><span>刀轨设置</span><svg class="chev"><use href="#chev-up"/></svg></div>
        <div class="row-f top"><span class="lab tall">方法</span><div class="sel-box w117"><span>METHOD</span><i class="caret"></i></div><div class="btn"><svg><use href="#i-method"/></svg></div><div class="btn dis"><svg><use href="#i-wrench-gray"/></svg></div></div>
        <div class="row-f sel-row"><span class="lab">切削模式</span><div class="sel-box w141"><span class="with-ic"><svg class="mode-ic" viewBox="0 0 14 14"><path d="M0 .5h14M.5 0v12" stroke="#111" stroke-dasharray="1 1"/><rect x="2.500" y="2.500" width="9" height="9" fill="#fff" stroke="#1a1ad0"/><rect x="5" y="5" width="4" height="4" fill="#fff" stroke="#1a1ad0"/><path d="M0 13.500h14" stroke="#f0f" stroke-dasharray="2 1"/></svg>跟随周边</span><i class="caret"></i></div></div>
        <div class="row-f sel-row s3"><span class="lab">步距</span><div class="sel-box w141"><span>刀具平直百分比</span><i class="caret"></i></div></div>
        <div class="row-f in-row"><span class="lab">平面直径百分比</span><div class="num"><div class="num-val"><span>75.0000</span></div></div></div>
        <div class="row-f in-row"><span class="lab">毛坯距离</span><div class="num"><div class="num-val"><span>3.0000</span></div></div></div>
        <div class="row-f in-row"><span class="lab">每刀切削深度</span><div class="num"><div class="num-val"><span>0.0000</span></div></div></div>
        <div class="row-f in-row"><span class="lab">最终底面余量</span><div class="num"><div class="num-val"><span>0.0000</span></div></div></div>
        <div class="row-f mid"><span class="lab">切削参数</span><div class="btn"><svg><use href="#i-cut"/></svg></div></div>
        <div class="row-f mid"><span class="lab">非切削移动</span><div class="btn"><svg><use href="#i-noncut"/></svg></div></div>
        <div class="row-f mid"><span class="lab">进给率和速度</span><div class="btn"><svg><use href="#i-feed"/></svg></div></div>
      </section>

      <section class="sec"><div class="sec-head"><span>机床控制</span><svg class="chev"><use href="#chev-down"/></svg></div></section>
      <section class="sec"><div class="sec-head"><span>程序</span><svg class="chev"><use href="#chev-down"/></svg></div></section>
      <section class="sec"><div class="sec-head"><span>描述</span><svg class="chev"><use href="#chev-down"/></svg></div></section>
      <section class="sec"><div class="sec-head"><span>选项</span><svg class="chev"><use href="#chev-down"/></svg></div></section>
      <section class="sec ops">
        <div class="sec-head"><span>操作</span><svg class="chev"><use href="#chev-up"/></svg></div>
        <div class="op-row">
          <div class="btn"><svg><use href="#i-gen"/></svg></div>
          <div class="btn"><svg><use href="#i-replay"/></svg></div>
          <div class="btn"><svg><use href="#i-verify"/></svg></div>
          <div class="btn"><svg><use href="#i-list"/></svg></div>
        </div>
      </section>
    </div>
    <div class="vscroll">
      <div class="sb-btn"><i class="tri up"></i></div>
      <div class="sb-thumb"><i class="sb-grip"></i></div>
      <div class="sb-btn down"><i class="tri dn"></i></div>
    </div>
  </div>
  <div class="dlg-foot">
    <div class="pbtn primary">确定</div>
    <div class="pbtn">取消</div>
  </div>
</div>

<div class="logo">
  <svg class="logo-mark" viewBox="688 879 72 82">
    <path d="M724 879L759.500 899.500 759.500 940.500 724 961 688.500 940.500 688.500 899.500z" fill="#2a7aa6" opacity=".95"/>
    <path d="M724 879L738 888C738 900 730 906 716 904L694 918C690 912 689 906 688.500 899.500z" fill="#7496a8"/>
    <path d="M688.500 899.500L692 918C694 932 704 940 720 945L724 961 688.500 940.500z" fill="#4a87a6"/>
    <path d="M738 888L759.500 899.500V940.500L738 950C752 940 756 925 753 910 750 900 745 893 738 888z" fill="#1c6a96"/>
    <path d="M720 945C735 948 748 940 753 925V940.500L724 961z" fill="#1f77a8"/>
    <path d="M724 879C740 888 745 905 740 905M688.500 899.500C700 895 712 893 724 897M688.500 940C686 925 692 912 704 906M724 961C708 952 703 942 705 932M759.500 940C745 948 733 946 724 943M759.500 899.500C760 915 755 928 744 935" fill="none" stroke="#222327" stroke-width=".9"/>
    <path d="M724 897L743 908V932L724 943 705 932V908z" fill="#222327"/>
    <path d="M724 902L739 911 724 920 709 911z" fill="#6e8c9e"/>
    <path d="M709 911L724 920V938L709 929z" fill="#457fa3"/>
    <path d="M739 911L724 920V938L739 929z" fill="#176a99"/>
  </svg>
  <div class="logo-text">
    <div class="logo-big">3D世界网</div>
    <div class="logo-small">WWW.3DSJW.COM</div>
  </div>
</div>

<svg class="annot" viewBox="0 0 971 974">
  <polygon class="arrow" transform="translate(281 116) rotate(18.800)" points="0,0 25,-9 19,-3.500 139.500,0 19,3.500 25,9"/>
  <polygon class="arrow" transform="translate(328 180) rotate(25.400)" points="0,0 25,-9 19,-3.500 110,0 19,3.500 25,9"/>
  <polygon class="arrow" transform="translate(323 327) rotate(30)" points="0,0 25,-9 19,-3.500 112,0 19,3.500 25,9"/>
  <polygon class="arrow" transform="translate(307 502) rotate(16.300)" points="0,0 25,-9 19,-3.500 118,0 19,3.500 25,9"/>
  <polygon class="arrow" transform="translate(340 637) rotate(27.500)" points="0,0 25,-9 19,-3.500 84.500,0 19,3.500 25,9"/>
  <polygon class="arrow" transform="translate(355 742) rotate(26.800)" points="0,0 25,-9 19,-3.500 104,0 19,3.500 25,9"/>
  <polygon class="arrow" transform="translate(150 895.500) rotate(-27.700)" points="0,0 25,-9 19,-3.500 93.700,0 19,3.500 25,9"/>
  <circle class="dot" cx="420" cy="160" r="10"/><text class="num-t" x="420" y="165">1</text>
  <circle class="dot" cx="437" cy="231" r="10"/><text class="num-t" x="437" y="236">2</text>
  <circle class="dot" cx="430" cy="389" r="10"/><text class="num-t" x="430" y="394">3</text>
  <circle class="dot" cx="428" cy="537" r="10"/><text class="num-t" x="428" y="542">4</text>
  <circle class="dot" cx="422" cy="681" r="10"/><text class="num-t" x="422" y="686">5</text>
  <circle class="dot" cx="458" cy="791" r="10"/><text class="num-t" x="458" y="796">6</text>
  <text class="gen" x="237" y="878">生成刀路</text>
</svg>
</body>
</html>
```

FILE: styles.css
```css
* { box-sizing: border-box; }
html, body { margin: 0; padding: 0; }
body {
  width: 971px; height: 974px; overflow: hidden; position: relative;
  background: #fff; color: #333;
  font: 12px "Liberation Sans", "Noto Sans CJK SC", sans-serif;
}
.defs { position: absolute; width: 0; height: 0; }
i { display: block; font-style: normal; }
.fill { flex: 1; }

/* menu */
.menubar {
  height: 29px; border-top: 2px solid #fff; background: #c6d6d3;
  display: flex; align-items: center; gap: 12px; white-space: nowrap;
  font-size: 12px; color: #333; letter-spacing: -.5px;
}
.mi.first { margin-right: -1px; }
.mi.wide { margin-left: 9px; }
.mi.tight { letter-spacing: -.8px; }

/* toolbars */
.toolbars { height: 135px; }
.tb-row { display: flex; height: 34px; }
.tb-row:nth-child(n+2) { height: 33.500px; }
.tb-row.last { height: 34px; align-items: flex-start; }
.tb-group { display: flex; align-items: center; height: 100%; border-bottom: 2px solid #e3e3e3; }
.edge-left { border-left: 1px solid #e3e3e3; }
.g1a { width: 413px; padding-right: 7px; }
.g1b { width: 349px; border-right: 2px solid #e3e3e3; }
.g1c { margin-left: 23px; flex: 1; overflow: hidden; }
.g2a { width: 405px; }
.g2b { width: 146px; margin-left: 33px; border-right: 2px solid #e3e3e3; }
.g2c { margin-left: 162px; flex: 1; overflow: hidden; }
.g3a { width: 748px; border-right: 2px solid #e3e3e3; }
.g3b { margin-left: 90px; flex: 1; overflow: hidden; }
.tail4 { margin-right: 4px; }
.ic { width: 24px; height: 24px; flex: none; }
.stub { width: 7px; height: 24px; flex: none; }
.ic-grid { width: 33px; height: 24px; flex: none; margin-left: 6px; }
.ic-letter { font: 7px "Liberation Sans", sans-serif; fill: #aaa; }
.m2 { margin-left: 2px; } .m4 { margin-left: 4px; } .m5 { margin-left: 5px; } .m6 { margin-left: 6px; }
.m7 { margin-left: 7px; } .m8 { margin-left: 8px; } .m9 { margin-left: 9px; }
.caret { width: 0; height: 0; flex: none; border: 4px solid transparent; border-top: 4px solid #111; border-bottom: 0; }
.caret.low { margin-top: 7px; }
.vr { width: 1px; height: 26px; flex: none; background: #c8c8c8; }
.grip { width: 3px; height: 26px; flex: none; background-image: radial-gradient(#999 35%, transparent 45%); background-size: 3px 3px; }
.edge-left-tight { margin-left: 0; }
.stub-ring { width: 8px; height: 16px; border: 2px solid #777; border-left: 0; border-radius: 0 8px 8px 0; }
.tb-select {
  width: 48px; height: 19px; flex: none; border: 1px solid #999; background: #fff;
  display: flex; align-items: center; justify-content: space-between; padding: 0 7px 0 3px;
  font-size: 12px; color: #223;
}
.path-input { width: 40px; height: 20px; margin-top: 8px; border-top: 1px solid #ddd; border-bottom: 1px solid #98a09e; }
.tab-cube { width: 16px; height: 30px; margin-top: 3px; background: #c9d7d3; }
.ic-mini { width: 16px; height: 30px; display: block; }
.tab-tail { width: 570px; }

/* workspace */
.workspace { display: flex; height: 810px; }
.navlist { width: 40px; flex: none; display: flex; flex-direction: column; background: #fff; }
.nav-head { height: 31px; border-top: 1px solid #98a09e; border-bottom: 1px solid #e4e4e4; }
.nav-rows { height: 688px; overflow: hidden; }
.row { height: 20px; border-bottom: 1px solid #eee; background: #fff; }
.row:nth-child(odd) { background: #fafafa; }
.row.head { background: #f0f0f0; border-bottom: 1px solid #ddd; }
.row.sel { background: #3399ff; border-bottom: 0; }
.nav-split { height: 22px; background: linear-gradient(#c8c8c8, #ececec 62%, #a8a8a8 62%, #a8a8a8 68%, #eee 68%, #eee 92%, #a8a8a8 92%); }
.nav-lower { height: 48px; }
.lower-row { height: 24px; border-bottom: 2px solid #ddd; }
.nav-tabs { flex: 1; display: flex; align-items: flex-end; background: #f7f7f7; }
.tab-l { width: 0; height: 0; margin: 0 0 0 1px; border: 6px solid transparent; border-right-color: #bbb; border-left: 0; }
.tab-r { width: 0; height: 0; margin: 0 0 0 12px; border: 5px solid transparent; border-left-color: #ccc; border-right: 0; }
.tab-vr { width: 1px; height: 14px; margin-left: 11px; background: #bbb; }

.graphics { margin-left: 345px; flex: 1; display: flex; flex-direction: column; }
.viewport {
  height: 795px; position: relative; background: #222327;
  border-top: 1px solid #e89a4d; border-bottom: 1px solid #e89a4d; margin-top: 1px;
  box-shadow: 0 -1px 0 #8a8a8a;
}
.scene { display: block; width: 586px; height: 793px; }
.hline { position: absolute; left: 0; right: 0; top: 785px; height: 1px; background: #fff; }
.axis { font: 13px "Liberation Sans", sans-serif; }
.axis.green { fill: #2e8f2e; } .axis.blue { fill: #1a3fd0; } .axis.red { fill: #c62a2a; }
.axis.small { font-size: 12px; }
.status { font: 500 13px "Noto Sans CJK SC", sans-serif; fill: #e0903f; }
.cyan { fill: none; stroke: #24e0e0; stroke-width: 1.300; stroke-linejoin: round; }
.cyan-dot { fill: none; stroke: #24e0e0; stroke-width: 1.200; stroke-dasharray: 2 1; }
.blue-dash { fill: none; stroke: #2222e8; stroke-width: 1.300; stroke-dasharray: 3 2; }
.pink { fill: none; stroke: #e8d0da; stroke-width: 1.200; }

.bottom-strip { flex: 1; display: flex; align-items: flex-start; background: #fff; }
.ic-b { width: 20px; height: 20px; flex: none; margin-top: 5px; }
.b-vr { width: 1px; height: 14px; background: #bbb; flex: none; margin-top: 2px; }
.m-lock { margin-left: 8px; } .m-a { margin-left: 23px; } .m-b { margin-left: 32px; }
.m-c { margin-left: 27px; } .m-d { margin-left: 8px; } .m-e { margin-left: 13px; } .m-f { margin-left: 30px; }

/* dialog */
.dialog {
  position: absolute; left: 40px; top: 36px; width: 345px; height: 938px;
  background: #e4e4e4; border-left: 1px solid #bcbcbc;
}
.titlebar { height: 24px; background: #5c8781; display: flex; align-items: center; color: #fff; }
.gear { width: 14px; height: 14px; margin-left: 8px; }
.title { margin-left: 10px; font-size: 14px; color: #f4f4f4; flex: 1; }
.close { width: 12px; height: 12px; margin-right: 9px; margin-top: 2px; }
.dlg-body { display: flex; height: 882px; padding-left: 5px; }
.panels { width: 316px; padding-top: 4px; }
.sec { background: #fff; border-bottom: 2px solid #c6c6c6; margin-bottom: 2px; }
.sec.ops { border-bottom: 0; margin: 0; height: 76px; }
.sec-head { height: 23px; display: flex; align-items: flex-end; justify-content: space-between; padding: 0 5px 0 7px; color: #3a8fc0; font-size: 14px; line-height: 20px; }
.chev { width: 14px; height: 10px; margin-bottom: 5px; }
.sec.open { padding-bottom: 8px; }
.row-f { display: flex; align-items: flex-start; justify-content: flex-end; gap: 2px; padding: 0 9px; height: 32px; margin-top: 2px; }
.row-f.top { margin-top: 7px; }
.lab { margin-right: auto; font-size: 12px; color: #333; line-height: 16px; }
.lab.tall { line-height: 25px; }
.lab.low { padding-top: 11px; }
.btn { width: 32px; height: 32px; border: 1px solid #aaa; background: #fff; display: flex; align-items: center; justify-content: center; flex: none; }
.btn.dis { border-color: #ddd; }
.btn svg { width: 26px; height: 26px; display: block; }
.sel-box { height: 25px; border: 1px solid #aaa; background: #fff; display: flex; align-items: center; justify-content: space-between; padding: 0 6px 0 4px; color: #333; white-space: nowrap; overflow: hidden; }
.w117 { width: 117px; }
.w141 { width: 141px; }
.with-ic { display: flex; align-items: center; gap: 5px; }
.mode-ic { width: 15px; height: 14px; }
.row-f.sel-row { height: 25px; }
.row-f.sel-row .lab { line-height: 28px; }
.row-f.s3 { margin-top: 3px; }
.row-f.in-row { height: 24px; margin-top: 1px; }
.row-f.in-row .lab { line-height: 26px; }
.num { width: 82px; height: 24px; border: 1px solid #aaa; background: #fff; padding-right: 3px; }
.num-val { height: 100%; display: flex; justify-content: flex-end; align-items: center; font: 14px "Liberation Mono", monospace; letter-spacing: .3px; color: #444; }
.num-val span::after { content: ""; display: inline-block; width: 2px; height: 9px; margin-left: 2px; border-left: 1px solid #444; }
.row-f.mid { align-items: center; }
.subsec { height: 24px; margin: 2px 9px 0; background: #eff5f5; border: 1px solid #dcdcdc; display: flex; align-items: center; justify-content: space-between; padding: 0 5px 2px 8px; color: #4a90b8; }
.subsec .chev { margin-bottom: 0; margin-top: 2px; }
.op-row { display: flex; gap: 2px; margin-top: 12px; margin-left: 91px; }
.vscroll { width: 15px; display: flex; flex-direction: column; padding-top: 5px; margin-left: 1px; }
.sb-btn { height: 16px; border: 1px solid #b4b4b4; background: linear-gradient(#fafafa, #d8d8d8); display: flex; align-items: center; justify-content: center; margin: 0 1px 1px; }
.sb-btn.down { margin-top: 7px; }
.tri { width: 0; height: 0; border: 4px solid transparent; }
.tri.up { border-top: 0; border-bottom-color: #555; }
.tri.dn { border-bottom: 0; border-top-color: #777; }
.sb-thumb { height: 836px; border: 1px solid #3f86b4; background: linear-gradient(90deg, #e2f2fb, #b4dcf6 40%, #a9d6f3); display: flex; align-items: center; justify-content: center; }
.sb-grip { width: 7px; height: 6px; border-top: 1px solid #6a9ab8; border-bottom: 1px solid #6a9ab8; background: linear-gradient(#6a9ab8, #6a9ab8) center/100% 1px no-repeat; margin-top: -7px; }
.dlg-foot { display: flex; justify-content: flex-end; gap: 6px; padding: 3px 15px 0 0; }
.pbtn { width: 54px; height: 25px; border: 1px solid #aaa; background: #c4c5c8; display: flex; align-items: center; justify-content: center; color: #222; font-size: 12px; }
.pbtn.primary { background: #9fcde9; border-color: #4a9bc9; }

/* watermark */
.logo { position: absolute; left: 688px; top: 879px; display: flex; gap: 9px; }
.logo-mark { width: 72px; height: 82px; display: block; }
.logo-big { font: bold 38px/44px "Liberation Sans", "Noto Sans CJK SC", sans-serif; color: #87898c; margin-top: 8px; white-space: nowrap; letter-spacing: 3px; }
.logo-small { font: bold 13px/14px "Liberation Sans", sans-serif; color: #87898c; letter-spacing: 4.400px; margin-top: 4px; white-space: nowrap; }

/* annotations */
.annot { position: absolute; left: 0; top: 0; width: 971px; height: 974px; pointer-events: none; }
.arrow { fill: #f23a3a; }
.dot { fill: #ee3333; }
.num-t { font: 13px "Liberation Sans", sans-serif; fill: #fff; text-anchor: middle; }
.gen { font: 29px "Noto Sans CJK SC", sans-serif; fill: #f33a3a; }
```
